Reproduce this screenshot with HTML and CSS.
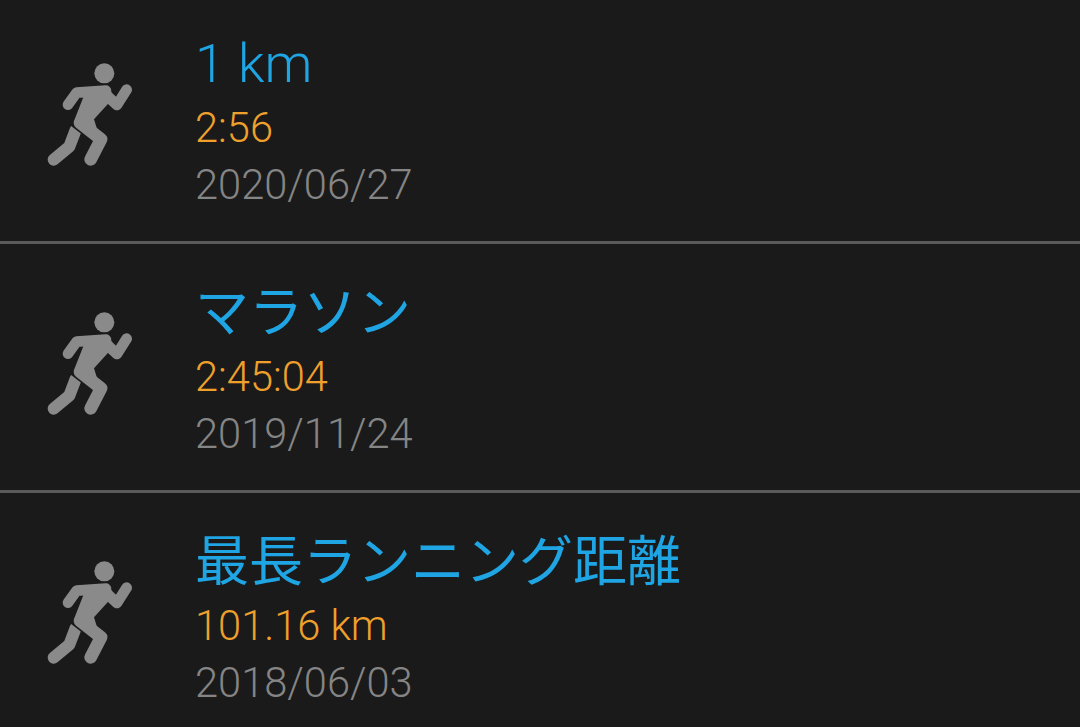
FILE: index.html
```html
<!DOCTYPE html>
<html lang="ja">
<head>
<meta charset="utf-8">
<title>自己ベスト</title>
<link rel="stylesheet" href="styles.css">
</head>
<body>
<svg class="defs" width="0" height="0" aria-hidden="true">
  <symbol id="run" viewBox="0 0 360 390">
    <path class="limb" stroke-width="36" d="M71 329 L118 290 L137 240"/>
    <path class="gap" stroke-width="46" d="M120 196 L213 268"/>
    <circle cx="223" cy="70" r="30" fill="currentColor"/>
    <path class="limb" stroke-width="32" d="M290 119 L261 165 L232 138"/>
    <path class="limb" stroke-width="32" d="M114 164 L140 128 L228 122"/>
    <path class="limb" stroke-width="38" d="M150 218 L213 268 L182 328"/>
    <path fill="currentColor" d="M160 125 L240 118 L252 142 L192 208 L205 250 L150 235 L134 208 L160 142 Z"/>
  </symbol>
</svg>
<main class="list">
  <section class="row">
    <svg class="icon"><use href="#run"/></svg>
    <div class="text">
      <div class="title">1 km</div>
      <div class="value">2:56</div>
      <div class="date">2020/06/27</div>
    </div>
  </section>
  <section class="row">
    <svg class="icon"><use href="#run"/></svg>
    <div class="text">
      <div class="title cjk">マラソン</div>
      <div class="value">2:45:04</div>
      <div class="date">2019/11/24</div>
    </div>
  </section>
  <section class="row">
    <svg class="icon"><use href="#run"/></svg>
    <div class="text">
      <div class="title cjk">最長ランニング距離</div>
      <div class="value">101.16 km</div>
      <div class="date">2018/06/03</div>
    </div>
  </section>
</main>
</body>
</html>
```
FILE: styles.css
```css
html, body {
  margin: 0;
  padding: 0;
  height: 100%;
  overflow: hidden;
  background: #1a1a1a;
}
.defs { position: absolute; }
.limb { fill: none; stroke: currentColor; stroke-linecap: round; stroke-linejoin: round; }
.gap { fill: none; stroke: #1a1a1a; stroke-linecap: butt; }
.list {
  display: flex;
  flex-direction: column;
  margin-top: -5px;
  font-family: Roboto, "Noto Sans CJK JP", sans-serif;
  font-weight: 300;
}
.row {
  display: flex;
  align-items: flex-start;
  height: 246px;
  border-bottom: 3px solid #5a5a5a;
}
.row:last-child { border-bottom: 0; }
.icon {
  width: 120px;
  height: 130px;
  margin: 55px 0 0 30px;
  color: #8a8a8a;
  flex: none;
}
.text { margin-left: 45px; display: flex; flex-direction: column; }
.title { font-size: 54px; line-height: 64px; height: 64px; margin-top: 37px; color: #1fa5e3; }
.title.cjk {
  font-family: "Noto Sans CJK JP", sans-serif;
  font-weight: 400;
  margin-top: 33px;
  margin-bottom: 4px;
}
.value { font-size: 41.6px; line-height: 50px; margin-top: 7px; color: #efa02c; }
.date { font-size: 41.6px; line-height: 50px; margin-top: 7px; color: #858585; }
```
